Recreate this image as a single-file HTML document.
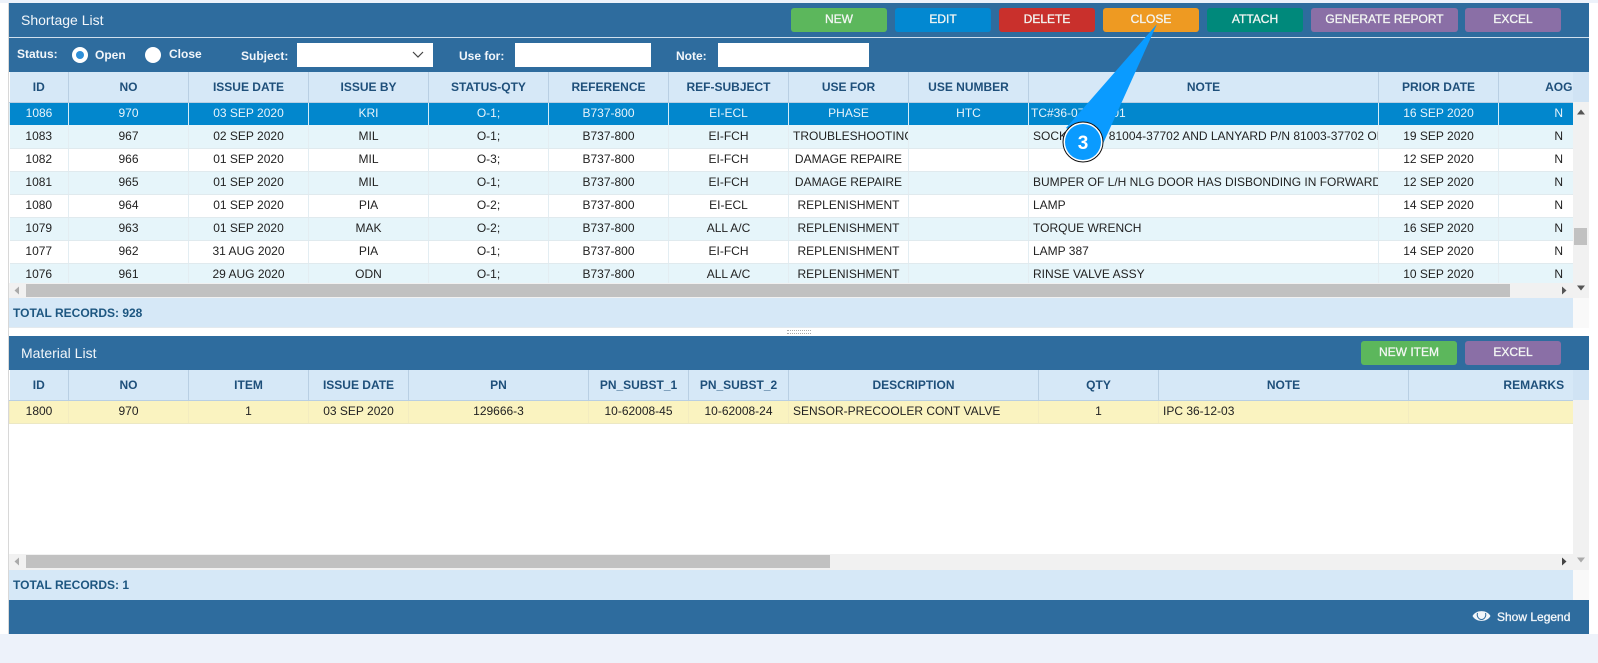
<!DOCTYPE html>
<html lang="en">
<head>
<meta charset="utf-8">
<title>Shortage List</title>
<style>
html,body{margin:0;padding:0;}
body{width:1598px;height:663px;position:relative;overflow:hidden;background:#fff;font-family:"Liberation Sans",Arial,sans-serif;font-size:12px;color:#222;}
.abs{position:absolute;}
.bar{position:absolute;background:#2e6c9e;}
.ttl{position:absolute;color:#f2f6fa;font-size:14px;line-height:16px;}
.btn{position:absolute;top:8px;height:24px;line-height:22px;width:96px;border-radius:3px;color:#f3f6f3;text-align:center;font-size:12px;-webkit-text-stroke:.3px #f3f6f3;}
.lbl{position:absolute;color:#f2f6fa;font-weight:bold;font-size:12px;line-height:14px;}
.inp{position:absolute;top:43px;height:24px;background:#fff;}
table{border-collapse:collapse;table-layout:fixed;position:absolute;left:0;top:0;}
th,td{overflow:hidden;white-space:nowrap;padding:0 4px;text-align:center;box-sizing:border-box;}
th{height:30px;background:#d6e8f7;color:#1e4f7a;font-size:12px;font-weight:bold;letter-spacing:0;border-left:1px solid #b9cfe3;border-bottom:1px solid #b9cfe3;}
th:first-child,td:first-child{border-left:0;}
td{height:23px;padding-bottom:2px;font-size:12px;border-left:1px solid #e3edf2;border-bottom:1px solid #e0eaee;color:#222;}
tr.o td{background:#e6f5fa;}
tr.e td{background:#fff;}
tr.s td{background:#0287cd;color:#e8f4fb;border-left:1px solid #d5ecf8;border-bottom:0;}
tr.f td{padding-bottom:0;}
tr.y td{background:#faf3c0;border-left:1px solid #f3ecc0;border-bottom:1px solid #ece8c4;}
td.l{text-align:left;}
tr.s td.l{padding-left:2px;}
.clip{position:absolute;overflow:hidden;}
.sb{position:absolute;background:#f1f1f1;}
.th{position:absolute;background:#c1c1c1;}
.tot{position:absolute;background:#d6e8f7;color:#1d5680;font-weight:bold;font-size:12px;line-height:14px;}
</style>
</head>
<body>
<div class="abs" style="left:0;top:0;width:1598px;height:3px;background:#edf2fa"></div>
<div class="abs" style="left:8px;top:3px;width:1px;height:631px;background:#d8d8d8"></div>
<div class="abs" style="left:0;top:634px;width:1598px;height:29px;background:#edf2fa"></div>

<!-- Shortage header -->
<div class="bar" style="left:9px;top:3px;width:1580px;height:34px"></div>
<div class="abs" style="left:9px;top:37px;width:1580px;height:1px;background:#cfe0ee"></div>
<div class="bar" style="left:9px;top:38px;width:1580px;height:34px"></div>
<div class="ttl" style="left:21px;top:12px">Shortage List</div>
<div class="btn" style="left:791px;background:#5cb75c">NEW</div>
<div class="btn" style="left:895px;background:#0288d1">EDIT</div>
<div class="btn" style="left:999px;background:#c9302c">DELETE</div>
<div class="btn" style="left:1103px;background:#ee9a22">CLOSE</div>
<div class="btn" style="left:1207px;background:#00897b">ATTACH</div>
<div class="btn" style="left:1311px;width:147px;background:#8a6fa6">GENERATE REPORT</div>
<div class="btn" style="left:1465px;background:#8a6fa6">EXCEL</div>

<div class="lbl" style="left:17px;top:47px">Status:</div>
<div class="abs" style="left:72px;top:47px;width:16px;height:16px;border-radius:50%;background:#fff"></div>
<div class="abs" style="left:76px;top:51px;width:8px;height:8px;border-radius:50%;background:#2e8fd8"></div>
<div class="lbl" style="left:95px;top:48px">Open</div>
<div class="abs" style="left:145px;top:47px;width:16px;height:16px;border-radius:50%;background:#fff"></div>
<div class="lbl" style="left:169px;top:47px">Close</div>
<div class="lbl" style="left:241px;top:49px">Subject:</div>
<div class="inp" style="left:297px;width:136px"></div>
<svg class="abs" style="left:411px;top:50px" width="14" height="10" viewBox="0 0 14 10"><path d="M2 2 L7 7 L12 2" fill="none" stroke="#444" stroke-width="1.2"/></svg>
<div class="lbl" style="left:459px;top:49px">Use for:</div>
<div class="inp" style="left:515px;width:136px"></div>
<div class="lbl" style="left:676px;top:49px">Note:</div>
<div class="inp" style="left:718px;width:151px"></div>

<!-- Shortage table -->
<div class="clip" style="left:9px;top:72px;width:1564px;height:211px">
<table style="width:1609px">
<colgroup><col style="width:59px"><col style="width:120px"><col style="width:120px"><col style="width:120px"><col style="width:120px"><col style="width:120px"><col style="width:120px"><col style="width:120px"><col style="width:120px"><col style="width:350px"><col style="width:120px"><col style="width:120px"></colgroup>
<tr><th>ID</th><th>NO</th><th>ISSUE DATE</th><th>ISSUE BY</th><th>STATUS-QTY</th><th>REFERENCE</th><th>REF-SUBJECT</th><th>USE FOR</th><th>USE NUMBER</th><th>NOTE</th><th>PRIOR DATE</th><th>AOG</th></tr>
<tr class="s"><td>1086</td><td>970</td><td>03 SEP 2020</td><td>KRI</td><td>O-1;</td><td>B737-800</td><td>EI-ECL</td><td>PHASE</td><td>HTC</td><td class="l">TC#36-07-000-01</td><td>16 SEP 2020</td><td>N</td></tr>
<tr class="o f"><td>1083</td><td>967</td><td>02 SEP 2020</td><td>MIL</td><td>O-1;</td><td>B737-800</td><td>EI-FCH</td><td>TROUBLESHOOTING</td><td></td><td class="l">SOCKET P/N 81004-37702 AND LANYARD P/N 81003-37702 ON</td><td>19 SEP 2020</td><td>N</td></tr>
<tr class="e"><td>1082</td><td>966</td><td>01 SEP 2020</td><td>MIL</td><td>O-3;</td><td>B737-800</td><td>EI-FCH</td><td>DAMAGE REPAIRE</td><td></td><td class="l"></td><td>12 SEP 2020</td><td>N</td></tr>
<tr class="o"><td>1081</td><td>965</td><td>01 SEP 2020</td><td>MIL</td><td>O-1;</td><td>B737-800</td><td>EI-FCH</td><td>DAMAGE REPAIRE</td><td></td><td class="l">BUMPER OF L/H NLG DOOR HAS DISBONDING IN FORWARD EDGE</td><td>12 SEP 2020</td><td>N</td></tr>
<tr class="e"><td>1080</td><td>964</td><td>01 SEP 2020</td><td>PIA</td><td>O-2;</td><td>B737-800</td><td>EI-ECL</td><td>REPLENISHMENT</td><td></td><td class="l">LAMP</td><td>14 SEP 2020</td><td>N</td></tr>
<tr class="o"><td>1079</td><td>963</td><td>01 SEP 2020</td><td>MAK</td><td>O-2;</td><td>B737-800</td><td>ALL A/C</td><td>REPLENISHMENT</td><td></td><td class="l">TORQUE WRENCH</td><td>16 SEP 2020</td><td>N</td></tr>
<tr class="e"><td>1077</td><td>962</td><td>31 AUG 2020</td><td>PIA</td><td>O-1;</td><td>B737-800</td><td>EI-FCH</td><td>REPLENISHMENT</td><td></td><td class="l">LAMP 387</td><td>14 SEP 2020</td><td>N</td></tr>
<tr class="o"><td>1076</td><td>961</td><td>29 AUG 2020</td><td>ODN</td><td>O-1;</td><td>B737-800</td><td>ALL A/C</td><td>REPLENISHMENT</td><td></td><td class="l">RINSE VALVE ASSY</td><td>10 SEP 2020</td><td>N</td></tr>
</table>
</div>
<div class="abs" style="left:1573px;top:72px;width:16px;height:30px;background:#d0e3f4"></div>
<div class="sb" style="left:1573px;top:102px;width:16px;height:196px"></div>
<div class="th" style="left:1574px;top:228px;width:13px;height:17px"></div>
<svg class="abs" style="left:1573px;top:107px" width="16" height="10"><path d="M4 7.5 L8 2.5 L12 7.5 Z" fill="#555"/></svg>
<svg class="abs" style="left:1573px;top:283px" width="16" height="10"><path d="M4 2.5 L8 7.5 L12 2.5 Z" fill="#555"/></svg>
<div class="sb" style="left:9px;top:283px;width:1564px;height:15px"></div>
<div class="th" style="left:26px;top:284px;width:1484px;height:13px"></div>
<svg class="abs" style="left:12px;top:285px" width="10" height="11"><path d="M7 1.5 L2.5 5.5 L7 9.5 Z" fill="#aaa"/></svg>
<svg class="abs" style="left:1559px;top:285px" width="10" height="11"><path d="M3 1.5 L7.5 5.5 L3 9.5 Z" fill="#555"/></svg>

<div class="tot" style="left:9px;top:298px;width:1564px;height:30px;border-bottom:1px solid #e3e9ee;box-sizing:border-box"><span class="abs" style="left:4px;top:8px">TOTAL RECORDS: 928</span></div>
<div class="abs" style="left:1573px;top:298px;width:16px;height:30px;background:#f9f9f9"></div>
<div class="abs" style="left:787px;top:330px;width:24px;height:2px;border-top:1px dotted #aaa;border-bottom:1px dotted #aaa"></div>

<!-- Material -->
<div class="bar" style="left:9px;top:336px;width:1580px;height:34px"></div>
<div class="ttl" style="left:21px;top:345px">Material List</div>
<div class="btn" style="left:1361px;top:341px;background:#5cb75c">NEW ITEM</div>
<div class="btn" style="left:1465px;top:341px;background:#8a6fa6">EXCEL</div>

<div class="clip" style="left:9px;top:370px;width:1564px;height:54px">
<table style="width:1649px">
<colgroup><col style="width:59px"><col style="width:120px"><col style="width:120px"><col style="width:100px"><col style="width:180px"><col style="width:100px"><col style="width:100px"><col style="width:250px"><col style="width:120px"><col style="width:250px"><col style="width:250px"></colgroup>
<tr><th>ID</th><th>NO</th><th>ITEM</th><th>ISSUE DATE</th><th>PN</th><th>PN_SUBST_1</th><th>PN_SUBST_2</th><th>DESCRIPTION</th><th>QTY</th><th>NOTE</th><th>REMARKS</th></tr>
<tr class="y"><td>1800</td><td>970</td><td>1</td><td>03 SEP 2020</td><td>129666-3</td><td>10-62008-45</td><td>10-62008-24</td><td class="l">SENSOR-PRECOOLER CONT VALVE</td><td>1</td><td class="l">IPC 36-12-03</td><td></td></tr>
</table>
</div>
<div class="abs" style="left:1573px;top:370px;width:16px;height:30px;background:#d0e3f4"></div>
<div class="sb" style="left:1573px;top:400px;width:16px;height:170px"></div>
<svg class="abs" style="left:1573px;top:555px" width="16" height="10"><path d="M4 2.5 L8 7.5 L12 2.5 Z" fill="#aaa"/></svg>
<div class="sb" style="left:9px;top:554px;width:1564px;height:16px"></div>
<div class="th" style="left:26px;top:555px;width:804px;height:13px"></div>
<svg class="abs" style="left:12px;top:556px" width="10" height="11"><path d="M7 1.5 L2.5 5.5 L7 9.5 Z" fill="#aaa"/></svg>
<svg class="abs" style="left:1559px;top:556px" width="10" height="11"><path d="M3 1.5 L7.5 5.5 L3 9.5 Z" fill="#444"/></svg>

<div class="tot" style="left:9px;top:570px;width:1564px;height:30px"><span class="abs" style="left:4px;top:8px">TOTAL RECORDS: 1</span></div>
<div class="abs" style="left:1573px;top:570px;width:16px;height:30px;background:#f9f9f9"></div>

<div class="bar" style="left:9px;top:600px;width:1580px;height:34px"></div>
<svg class="abs" style="left:1472px;top:609px" width="19" height="14" viewBox="0 0 19 14"><path d="M0.5 7 C4 0.5 15 0.5 18.5 7 C15 13.5 4 13.5 0.5 7 Z" fill="#f2f6fa"/><path d="M5.5 4 C4.5 7 6.5 10.5 9.5 10.5 C12.5 10.5 14.5 7 13.5 4" fill="none" stroke="#2e6c9e" stroke-width="1"/></svg>
<div class="abs" style="left:1497px;top:610px;color:#f2f6fa;font-size:12px;line-height:14px;-webkit-text-stroke:.3px #f2f6fa">Show Legend</div>

<!-- Callout -->
<svg class="abs" style="left:1040px;top:10px" width="130" height="165" viewBox="1040 10 130 165">
<path d="M1157 24 L1066 128 L1102 146 Z" fill="#0a9bff"/>
<circle cx="1083" cy="142" r="20" fill="#fff" stroke="#111" stroke-width="1"/>
<circle cx="1083" cy="142" r="18" fill="#0a9bff"/>
<text x="1083" y="149" text-anchor="middle" font-family="Liberation Sans, Arial, sans-serif" font-size="19" font-weight="bold" fill="#fff">3</text>
</svg>
</body>
</html>
